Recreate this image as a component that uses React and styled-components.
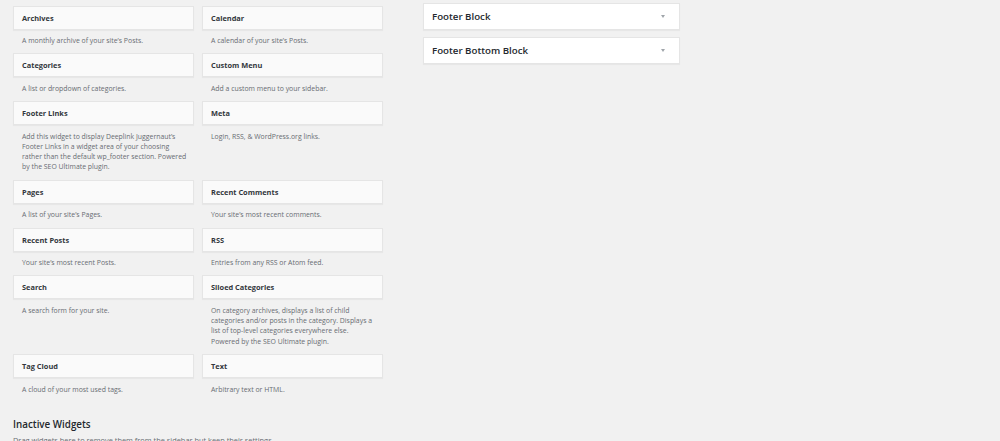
import React from "react";
import styled, { createGlobalStyle } from "styled-components";

const Global = createGlobalStyle`
  html, body {
    margin: 0;
    padding: 0;
    background: #f1f1f1;
    font-family: "Open Sans", "Liberation Sans", sans-serif;
    color: #23282d;
  }
`;

const Page = styled.div`
  display: flex;
  align-items: flex-start;
  padding: 0 0 0 13px;
  gap: 40px;
  height: 441px;
  overflow: hidden;
`;

const Available = styled.div`
  width: 370px;
  padding-top: 5.5px;
`;

const WidgetGrid = styled.div`
  display: grid;
  grid-template-columns: 181px 181px;
  column-gap: 8px;
`;

const Widget = styled.div`
  display: flex;
  flex-direction: column;
`;

const WidgetTop = styled.div`
  height: 22px;
  display: flex;
  align-items: center;
  padding: 0 8px;
  background: #fafafa;
  border: 1px solid #e5e5e5;
  box-shadow: 0 1px 1px rgba(0, 0, 0, 0.04);
  font-size: 7.4px;
  font-weight: 700;
  color: #32373c;
`;

const WidgetDesc = styled.div`
  padding: 6.5px 4px 7px 9px;
  width: 180px;
  box-sizing: border-box;
  font-size: 6.9px;
  line-height: 10.3px;
  color: #686c71;
`;

const InactiveTitle = styled.h2`
  margin: 16px 0 0;
  font-size: 9.8px;
  font-weight: 600;
  color: #23282d;
`;

const InactiveText = styled.p`
  margin: 4px 0 0;
  font-size: 7.4px;
  color: #686c71;
`;

const Sidebars = styled.div`
  width: 257px;
  padding-top: 3px;
  display: flex;
  flex-direction: column;
  gap: 7px;
`;

const SidebarBox = styled.div`
  height: 25px;
  display: flex;
  align-items: center;
  justify-content: space-between;
  padding: 0 14px 0 8px;
  background: #fff;
  border: 1px solid #e5e5e5;
  box-shadow: 0 1px 1px rgba(0, 0, 0, 0.04);
`;

const SidebarName = styled.span`
  font-size: 9.7px;
  font-weight: 600;
  color: #23282d;
`;

const Arrow = styled.span`
  width: 0;
  height: 0;
  border-left: 2.5px solid transparent;
  border-right: 2.5px solid transparent;
  border-top: 3px solid #a0a5aa;
`;

const widgets = [
  ["Archives", "A monthly archive of your site\u2019s Posts."],
  ["Calendar", "A calendar of your site\u2019s Posts."],
  ["Categories", "A list or dropdown of categories."],
  ["Custom Menu", "Add a custom menu to your sidebar."],
  [
    "Footer Links",
    "Add this widget to display Deeplink Juggernaut\u2019s Footer Links in a widget area of your choosing rather than the default wp_footer section. Powered by the SEO Ultimate plugin.",
  ],
  ["Meta", "Login, RSS, & WordPress.org links."],
  ["Pages", "A list of your site\u2019s Pages."],
  ["Recent Comments", "Your site\u2019s most recent comments."],
  ["Recent Posts", "Your site\u2019s most recent Posts."],
  ["RSS", "Entries from any RSS or Atom feed."],
  ["Search", "A search form for your site."],
  [
    "Siloed Categories",
    "On category archives, displays a list of child categories and/or posts in the category. Displays a list of top-level categories everywhere else. Powered by the SEO Ultimate plugin.",
  ],
  ["Tag Cloud", "A cloud of your most used tags."],
  ["Text", "Arbitrary text or HTML."],
];

export default function App() {
  return (
    <>
      <Global />
      <Page>
        <Available>
          <WidgetGrid>
            {widgets.map(([title, desc]) => (
              <Widget key={title}>
                <WidgetTop>{title}</WidgetTop>
                <WidgetDesc>{desc}</WidgetDesc>
              </Widget>
            ))}
          </WidgetGrid>
          <InactiveTitle>Inactive Widgets</InactiveTitle>
          <InactiveText>
            Drag widgets here to remove them from the sidebar but keep their settings.
          </InactiveText>
        </Available>
        <Sidebars>
          <SidebarBox>
            <SidebarName>Footer Block</SidebarName>
            <Arrow />
          </SidebarBox>
          <SidebarBox>
            <SidebarName>Footer Bottom Block</SidebarName>
            <Arrow />
          </SidebarBox>
        </Sidebars>
      </Page>
    </>
  );
}
